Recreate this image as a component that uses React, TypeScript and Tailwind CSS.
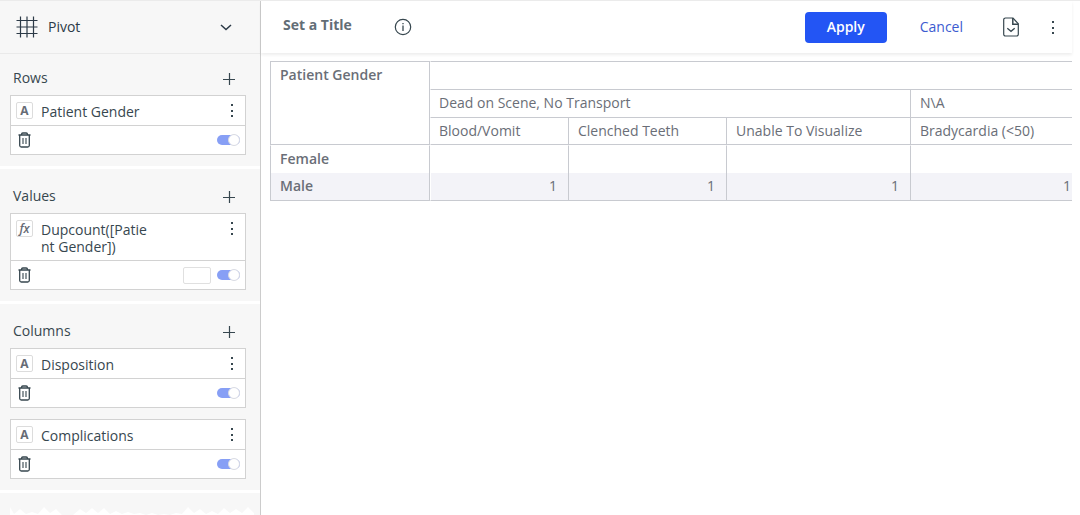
import { useState } from "react";

type FieldKind = "text" | "formula";

interface Field {
  id: string;
  title: string;
  kind: FieldKind;
  hasFormat?: boolean;
}

interface Panel {
  name: string;
  fields: Field[];
}

const panels: Panel[] = [
  {
    name: "Rows",
    fields: [{ id: "gender", title: "Patient Gender", kind: "text" }],
  },
  {
    name: "Values",
    fields: [
      {
        id: "dupcount",
        title: "Dupcount([Patient Gender])",
        kind: "formula",
        hasFormat: true,
      },
    ],
  },
  {
    name: "Columns",
    fields: [
      { id: "disposition", title: "Disposition", kind: "text" },
      { id: "complications", title: "Complications", kind: "text" },
    ],
  },
];

const complications = [
  "Blood/Vomit",
  "Clenched Teeth",
  "Unable To Visualize",
  "Bradycardia (<50)",
];

function GridIcon() {
  return (
    <svg className="size-6" viewBox="0 0 24 24" stroke="currentColor" fill="none" aria-hidden="true">
      <path d="M5.500 1.500v21M12 1.500v21M18.500 1.500v21M1.500 5.500h21M1.500 12h21M1.500 18.500h21" strokeWidth="1.200" />
    </svg>
  );
}

function TrashIcon() {
  return (
    <svg className="h-4 w-3.5" viewBox="0 0 14 16" stroke="currentColor" fill="none" aria-hidden="true">
      <path d="M.5 3h12M3.500 3V2.200A1.300 1.300 0 0 1 4.800 1h3.400a1.300 1.300 0 0 1 1.300 1.200V3M1.700 3v10.500A1.600 1.600 0 0 0 3.300 15h6.400a1.600 1.600 0 0 0 1.600-1.500V3" strokeWidth="1.300" />
      <path d="M5 6v6M8 6v6" strokeWidth="1.100" />
    </svg>
  );
}

function MoreIcon() {
  return (
    <svg className="h-4 w-1" viewBox="0 0 4 16" fill="currentColor" aria-hidden="true">
      <rect x="1" y="2" width="2" height="2" />
      <rect x="1" y="8" width="2" height="2" />
      <rect x="1" y="13" width="2" height="2" />
    </svg>
  );
}

function PlusIcon() {
  return (
    <svg className="size-3" viewBox="0 0 12 12" stroke="currentColor" aria-hidden="true">
      <path d="M6.500 0v12M0 6.500h12" strokeWidth="1.200" />
    </svg>
  );
}

function InfoIcon() {
  return (
    <svg className="size-[18px]" viewBox="0 0 18 18" stroke="currentColor" fill="none" aria-hidden="true">
      <circle cx="9" cy="9" r="7.700" strokeWidth="1.200" />
      <path d="M9 7.500v5.500M9 5v1.300" strokeWidth="1.300" />
    </svg>
  );
}

function ExportIcon() {
  return (
    <svg className="h-5 w-4" viewBox="0 0 16 20" stroke="currentColor" fill="none" aria-hidden="true">
      <path d="M10 1H2.500A1.700 1.700 0 0 0 .7 2.700v14.600A1.700 1.700 0 0 0 2.500 19h11a1.700 1.700 0 0 0 1.800-1.700V6.800z" strokeWidth="1.200" />
      <path d="M9.800 1v6.200h5.400" strokeWidth="1.500" />
      <path d="m4.300 11.300 3.700 3 3.700-3" strokeWidth="1.300" />
    </svg>
  );
}

function FieldCard({ field }: { field: Field }) {
  const [enabled, setEnabled] = useState(true);

  return (
    <div className="border border-[#d2d2d2] bg-white">
      <div className="flex items-start border-b border-[#d2d2d2] pt-1.5 pr-[11px] pb-[5px] pl-[5px]">
        <span
          className={`flex size-[17px] shrink-0 items-center justify-center rounded-xs border border-[#dcdcdc] text-xs text-[#666b75] ${
            field.kind === "formula" ? "font-semibold italic" : "font-bold"
          }`}
        >
          {field.kind === "formula" ? "fx" : "A"}
        </span>
        <span className="mt-px ml-2 w-28 text-sm leading-[17px] break-all">{field.title}</span>
        <button type="button" aria-label={`${field.title} options`} className="ml-auto">
          <MoreIcon />
        </button>
      </div>
      <div className="flex h-7 items-center pr-[5px] pl-[7px]">
        <button type="button" aria-label={`Remove ${field.title}`}>
          <TrashIcon />
        </button>
        {field.hasFormat && (
          <button
            type="button"
            aria-label="Format"
            className="ml-auto h-[17px] w-7 rounded-xs border border-[#e0e0e0]"
          />
        )}
        <input
          type="checkbox"
          aria-label={`Enable ${field.title}`}
          checked={enabled}
          onChange={(e) => setEnabled(e.target.checked)}
          className={`flex h-2.5 w-[23px] appearance-none items-center rounded-full bg-gray-300 before:size-3 before:shrink-0 before:rounded-full before:border before:border-[#d9dbe3] before:bg-white checked:justify-end checked:bg-[#879ff5] ${
            field.hasFormat ? "ml-1.5" : "ml-auto"
          }`}
        />
      </div>
    </div>
  );
}

function Sidebar() {
  return (
    <aside className="flex w-[261px] shrink-0 flex-col border-r border-[#cccccc] bg-[#f7f7f7] text-[#37474f]">
      <button
        type="button"
        className="flex h-[53px] shrink-0 items-center border-b border-[#eaeaea] pr-7 pl-[15px] text-[#2c3a47]"
      >
        <GridIcon />
        <span className="ml-[9px] text-sm">Pivot</span>
        <svg className="ml-auto h-2 w-3" viewBox="0 0 12 8" stroke="currentColor" fill="none" aria-hidden="true">
          <path d="M1 2 6 6.500 11 2" strokeWidth="1.500" />
        </svg>
      </button>

      {panels.map((panel) => (
        <section
          key={panel.name}
          className="border-b-3 border-white px-2.5 pt-4 pr-3.5 pb-[11px] first-of-type:pt-[13px]"
        >
          <div className="flex h-7 items-start justify-between pr-[11px] pl-[3px]">
            <h2 className="text-sm leading-[22px]">{panel.name}</h2>
            <button type="button" aria-label={`Add to ${panel.name}`} className="mt-1.5">
              <PlusIcon />
            </button>
          </div>
          <div className="flex flex-col gap-[11px]">
            {panel.fields.map((field) => (
              <FieldCard key={field.id} field={field} />
            ))}
          </div>
        </section>
      ))}

      {/* torn edge where the settings list is cut off */}
      <div className="flex flex-1 items-end pl-2.5">
        <svg className="h-2 w-full" viewBox="0 0 250 8" preserveAspectRatio="none" fill="#ffffff" aria-hidden="true">
          <path d="M0 8V0L4 7L10 2L16 7L22 5L28 7L34 0L40 6L46 2L52 8H63L70 2L76 6L82 1L88 6L94 1L100 7L106 4L112 7L118 5L124 7L130 6L136 8L142 6L148 8L154 7L160 8L166 6L172 7L178 0L184 6L190 2L196 7L202 4L208 7L214 1L220 6L226 2L232 6L238 0L244 6V8z" />
        </svg>
      </div>
    </aside>
  );
}

function Toolbar() {
  return (
    <header className="mr-2 flex h-[52px] items-center pr-[17px] pl-[22px] text-[#37474f] shadow-[0_2px_3px_rgba(0,0,0,0.07)]">
      <h1 className="pb-1 text-sm font-bold text-[#626d76]">Set a Title</h1>
      <button type="button" aria-label="Info" className="ml-[42px]">
        <InfoIcon />
      </button>
      <button type="button" className="ml-auto h-[31px] w-[82px] rounded-sm bg-[#2355f4] text-sm font-semibold text-white">
        Apply
      </button>
      <button type="button" className="ml-[33px] text-sm text-[#3c5bd0]">
        Cancel
      </button>
      <button type="button" aria-label="Export" className="ml-10">
        <ExportIcon />
      </button>
      <button type="button" aria-label="More" className="ml-8">
        <MoreIcon />
      </button>
    </header>
  );
}

function PivotTable() {
  return (
    <div className="mt-2 mr-2 ml-[9px] overflow-hidden">
      <table className="w-[813px] table-fixed border-separate border-spacing-0 text-left text-sm text-[#6a6e77] [&_td]:border-[#c8cad0] [&_th]:border-[#c8cad0]">
        <colgroup>
          <col className="w-40" />
          <col className="w-[139px]" />
          <col className="w-[158px]" />
          <col className="w-[184px]" />
          <col className="w-[172px]" />
        </colgroup>
        <thead>
          <tr className="h-[29px]">
            <th rowSpan={3} scope="col" className="border px-[9px] pt-[3px] align-top leading-5 font-semibold">
              Patient Gender
            </th>
            <th colSpan={4} className="border-y border-l border-l-white!" />
          </tr>
          <tr className="h-7">
            <th colSpan={3} scope="colgroup" className="border-x border-b border-l-white! px-2 pb-0.5 font-normal">
              Dead on Scene, No Transport
            </th>
            <th scope="colgroup" className="border-b px-[9px] pb-0.5 font-normal">
              N\A
            </th>
          </tr>
          <tr className="h-[27px]">
            {complications.map((name) => (
              <th
                key={name}
                scope="col"
                className="border-r border-b px-[9px] font-normal first:border-l first:border-l-white! first:pl-2"
              >
                {name}
              </th>
            ))}
          </tr>
        </thead>
        <tbody>
          <tr className="h-7">
            <th scope="row" className="border-x border-t border-t-white! px-[9px] pb-0.5 font-semibold">
              Female
            </th>
            {complications.map((name, index) => (
              <td
                key={name}
                className={`border-t border-r border-t-white! ${
                  index === 0 ? "border-l border-l-white!" : ""
                }`}
              />
            ))}
          </tr>
          <tr className="h-7 bg-[#f3f3f8]">
            <th scope="row" className="border-x border-b px-[9px] pb-0.5 font-semibold">
              Male
            </th>
            {complications.map((name, index) => (
              <td
                key={name}
                className={`border-r border-b px-[11px] pb-0.5 text-right ${
                  index === 0 ? "border-l border-l-white!" : ""
                }`}
              >
                1
              </td>
            ))}
          </tr>
        </tbody>
      </table>
    </div>
  );
}

export default function App() {
  return (
    <div className="flex min-h-screen border-t border-[#ebebeb] bg-white font-['Open_Sans',sans-serif]">
      <Sidebar />
      <main className="min-w-0 flex-1">
        <Toolbar />
        <PivotTable />
      </main>
    </div>
  );
}
